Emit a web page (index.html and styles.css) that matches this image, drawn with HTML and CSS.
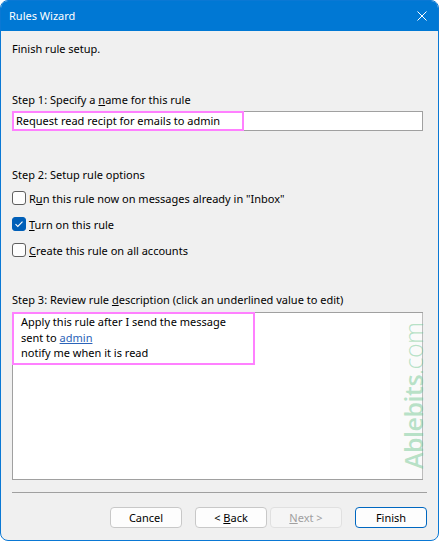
FILE: index.html
```html
<!DOCTYPE html>
<html>
<head>
<meta charset="utf-8">
<link rel="stylesheet" href="styles.css">
</head>
<body>
<div class="window">
  <div class="titlebar">
    <span class="title">Rules Wizard</span>
    <svg class="close" width="10" height="10" viewBox="0 0 10 10"><path d="M0.5 0.5 L9.5 9.5 M9.5 0.5 L0.5 9.5" stroke="#fff" stroke-width="1"/></svg>
  </div>
  <div class="content">
    <div class="line intro">Finish rule setup.</div>
    <div class="line step1">Step 1: Specify a <u>n</u>ame for this rule</div>
    <div class="input">
      <span class="input-text">Request read recipt for emails to admin</span>
      <span class="hl hl-input"></span>
    </div>
    <div class="line step2">Step 2: Setup rule options</div>
    <div class="options">
      <label class="opt"><span class="cb"></span><span>R<u>u</u>n this rule now on messages already in "Inbox"</span></label>
      <label class="opt"><span class="cb checked"><svg width="14" height="14" viewBox="0 0 14 14"><path d="M3.5 7.2 L5.8 9.4 L10.5 4.6" fill="none" stroke="#fff" stroke-width="1.1"/></svg></span><span><u>T</u>urn on this rule</span></label>
      <label class="opt"><span class="cb"></span><span><u>C</u>reate this rule on all accounts</span></label>
    </div>
    <div class="line step3">Step 3: Review rule <u>d</u>escription (click an underlined value to edit)</div>
    <div class="desc">
      <div class="desc-lines">
        <div>Apply this rule after I send the message</div>
        <div>sent to <a class="link">admin</a></div>
        <div>notify me when it is read</div>
      </div>
      <div class="wm-band"></div>
      <div class="watermark"><span class="wm-b">Ablebits</span><span class="wm-l">.com</span></div>
    </div>
    <div class="sep"></div>
    <div class="buttons">
      <div class="btn"><span>Cancel</span></div>
      <div class="pair">
        <div class="btn"><span>&lt; <u>B</u>ack</span></div>
        <div class="btn disabled"><span><u>N</u>ext &gt;</span></div>
      </div>
      <div class="btn default"><span>Finish</span></div>
    </div>
  </div>
</div>
</body>
</html>
```
FILE: styles.css
```css
* { box-sizing: border-box; }
html, body { margin: 0; padding: 0; background: #ffffff; }
body {
  font-family: "Noto Sans", "Open Sans", sans-serif;
  font-size: 11px;
  color: #000;
}
.window {
  width: 439px;
  height: 541px;
  border: 1px solid #0a78d4;
  border-radius: 8px;
  background: #f0f0f0;
  overflow: hidden;
  display: flex;
  flex-direction: column;
}
.titlebar {
  height: 30px;
  background: #0078d4;
  display: flex;
  align-items: center;
  justify-content: space-between;
  padding: 0 10px 1px 8px;
  color: #fff;
  flex: none;
}
.title { font-size: 11px; }
.close { margin-right: 1px; }
.content {
  padding: 0 0 0 11px;
  display: flex;
  flex-direction: column;
}
.line { line-height: 16px; height: 16px; white-space: nowrap; }
.intro { margin-top: 10px; }
.step1 { margin-top: 35px; }
.input {
  position: relative;
  margin-top: 3px;
  width: 411px;
  height: 20px;
  background: #fff;
  border: 1px solid #a0a0a0;
  line-height: 17px;
  padding-left: 3px;
}
.hl {
  position: absolute;
  border: 2px solid #ff80ff;
  pointer-events: none;
}
.hl-input { left: -1px; top: -1px; width: 232px; height: 20px; }
.step2 { margin-top: 36px; }
.options {
  margin-top: 7px;
  display: flex;
  flex-direction: column;
  gap: 10px;
}
.opt {
  display: flex;
  align-items: center;
  height: 16px;
  gap: 3px;
  white-space: nowrap;
}
.cb {
  width: 14px;
  height: 14px;
  border: 1px solid #5f5f5f;
  border-radius: 3px;
  background: #fdfdfd;
  flex: none;
  display: flex;
}
.cb.checked { background: #005fb8; border-color: #005fb8; }
.cb.checked svg { margin: -1px; }
.step3 { margin-top: 34px; }
.desc {
  position: relative;
  margin-top: 4px;
  width: 411px;
  height: 168px;
  background: #fff;
  border: 1px solid #a0a0a0;
}
.desc-lines {
  width: 243px;
  height: 53px;
  margin: -1px 0 0 -1px;
  border: 2px solid #ff80ff;
  padding: 0 0 0 7px;
  line-height: 15.5px;
  white-space: nowrap;
}
.link { color: #2b63b8; text-decoration: underline; }
.wm-band {
  position: absolute;
  left: 377px;
  top: 0;
  width: 44px;
  height: 166px;
  background: rgba(240, 240, 240, 0.35);
}
.watermark {
  position: absolute;
  left: 387px;
  top: 156px;
  transform-origin: 0 0;
  transform: rotate(-90deg);
  white-space: nowrap;
  font-family: "Open Sans", sans-serif;
  font-size: 25px;
  line-height: 27px;
  letter-spacing: -0.5px;
  color: rgba(100, 195, 135, 0.45);
}
.wm-b { font-weight: 600; }
.wm-l { font-weight: 300; }
.sep {
  margin-top: 12px;
  width: 415px;
  height: 1px;
  background: #a0a0a0;
}
.buttons {
  margin-top: 14px;
  width: 415px;
  display: flex;
  justify-content: flex-end;
  align-items: center;
}
.pair { display: flex; gap: 3px; margin: 0 13px; }
.btn {
  width: 72px;
  height: 21px;
  border: 1px solid #c8c8c8;
  border-radius: 4px;
  background: #fdfdfd;
  display: flex;
  align-items: center;
  justify-content: center;
  line-height: 16px;
  white-space: pre;
}
.btn.disabled { background: #f5f5f5; border-color: #e0e0e0; color: #a0a0a0; }
.btn.default { border-color: #0067c0; }
```
